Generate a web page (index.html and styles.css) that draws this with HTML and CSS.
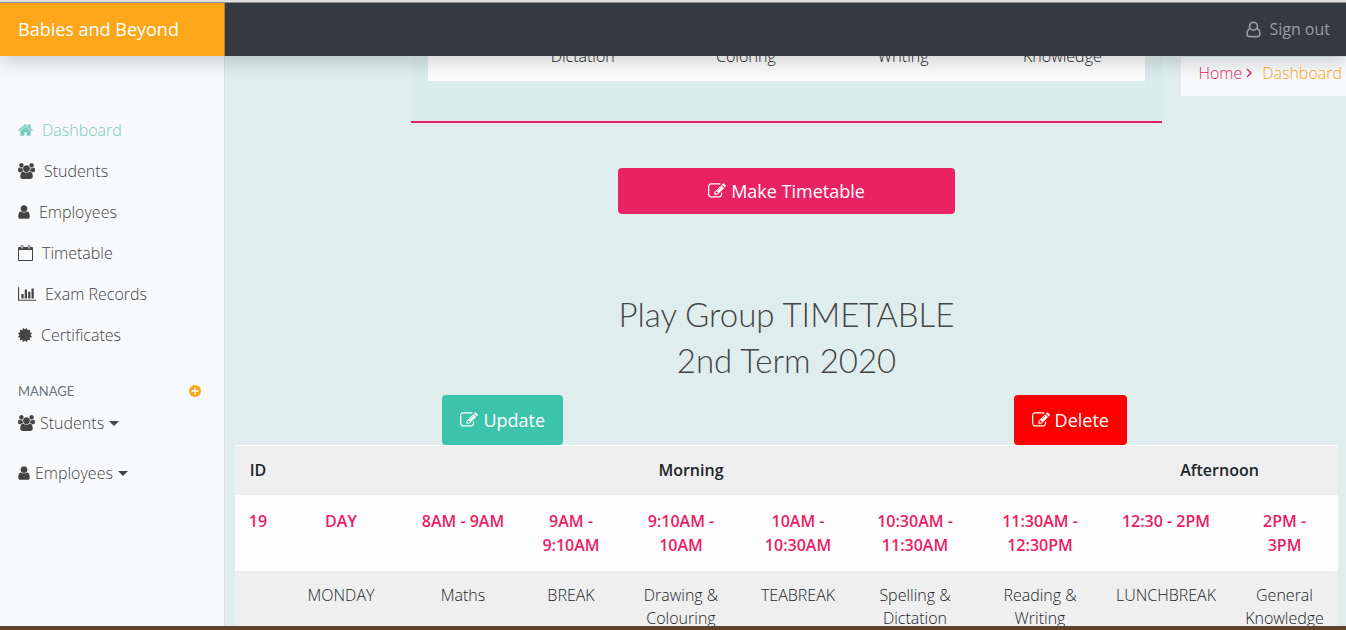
FILE: index.html
```html
<!DOCTYPE html>
<html lang="en">
<head>
<meta charset="utf-8">
<title>Babies and Beyond - Dashboard</title>
<link rel="stylesheet" href="styles.css">
</head>
<body>
<svg class="sprite" aria-hidden="true">
  <symbol id="i-users" viewBox="0 0 1920 1792"><path d="M593 896q-162 5-265 128h-134q-82 0-138-40.5t-56-118.5q0-353 124-353 6 0 43.5 21t97.5 42.5 119 21.5q67 0 133-23-5 37-5 66 0 139 81 256zm1071 637q0 120-73 189.5t-194 69.5h-874q-121 0-194-69.5t-73-189.5q0-53 3.5-103.5t14-109 26.5-108.5 43-97.5 62-81 85.5-53.5 111.5-20q10 0 43 21.5t73 48 107 48 135 21.5 135-21.5 107-48 73-48 43-21.5q61 0 111.5 20t85.5 53.5 62 81 43 97.5 26.5 108.5 14 109 3.5 103.5zm-1024-1277q0 106-75 181t-181 75-181-75-75-181 75-181 181-75 181 75 75 181zm704 384q0 159-112.5 271.5t-271.5 112.5-271.5-112.5-112.5-271.5 112.5-271.5 271.5-112.5 271.5 112.5 112.5 271.5zm576 225q0 78-56 118.5t-138 40.5h-134q-103-123-265-128 81-117 81-256 0-29-5-66 66 23 133 23 59 0 119-21.5t97.5-42.5 43.5-21q124 0 124 353zm-128-609q0 106-75 181t-181 75-181-75-75-181 75-181 181-75 181 75 75 181z"/></symbol>
  <symbol id="i-user" viewBox="256 0 1280 1792"><path d="M1536 1399q0 109-62.5 187t-150.5 78h-854q-88 0-150.5-78t-62.5-187q0-85 8.5-160.5t31.5-152 58.5-131 94-89 134.5-34.5q131 128 313 128t313-128q76 0 134.5 34.5t94 89 58.5 131 31.5 152 8.5 160.5zm-256-887q0 159-112.5 271.5t-271.5 112.5-271.5-112.5-112.5-271.5 112.5-271.5 271.5-112.5 271.5 112.5 112.5 271.5z"/></symbol>
  <symbol id="i-edit" viewBox="0 0 1792 1792"><path d="M888 1184l116-116-152-152-116 116v56h96v96h56zm440-720q-16-16-33 1l-350 350q-17 17-1 33t33-1l350-350q17-17 1-33zm80 594v190q0 119-84.5 203.5t-203.5 84.5h-832q-119 0-203.5-84.5t-84.5-203.5v-832q0-119 84.5-203.5t203.5-84.5h832q63 0 117 25 15 7 18 23 3 17-9 29l-49 49q-14 14-32 8-23-6-45-6h-832q-66 0-113 47t-47 113v832q0 66 47 113t113 47h832q66 0 113-47t47-113v-126q0-13 9-22l64-64q15-15 35-7t20 29zm-96-738l288 288-672 672h-288v-288zm444 132l-92 92-288-288 92-92q28-28 68-28t68 28l152 152q28 28 28 68t-28 68z"/></symbol>
</svg>

<header class="topbar">
  <a class="brand" href="#">Babies and Beyond</a>
  <a class="signout" href="#">
    <svg class="icon signout-icon" viewBox="0 0 16 18" aria-hidden="true"><g fill="none" stroke="currentColor" stroke-width="1.7"><circle cx="8" cy="5.5" r="4.2"/><path d="M4.6 8.2C2.300 8.500 1.200 10.500 1.200 13.400C1.200 15.500 2 16.600 3.800 16.600H12.200C14 16.600 14.800 15.500 14.800 13.400C14.800 10.500 13.700 8.500 11.400 8.200"/></g></svg>
    Sign out
  </a>
</header>

<div class="shell">
  <aside class="sidebar">
    <nav class="menu">
      <a class="menu-link active" href="#"><svg class="icon w15" viewBox="64 0 1664 1792" aria-hidden="true"><path d="M1472 992v480q0 26-19 45t-45 19h-384v-384h-256v384h-384q-26 0-45-19t-19-45v-480q0-1 .5-3t.5-3l575-474 575 474q1 2 1 6zm223-69l-62 74q-8 9-21 11h-3q-13 0-21-7l-692-577-692 577q-12 8-24 7-13-2-21-11l-62-74q-8-10-7-23.5t11-21.5l719-599q32-26 76-26t76 26l244 204v-195q0-14 9-23t23-9h192q14 0 23 9t9 23v408l219 182q10 8 11 21.5t-7 23.5z"/></svg>Dashboard</a>
      <a class="menu-link" href="#"><svg class="icon w17" aria-hidden="true"><use href="#i-users"/></svg>Students</a>
      <a class="menu-link" href="#"><svg class="icon w12" aria-hidden="true"><use href="#i-user"/></svg>Employees</a>
      <a class="menu-link" href="#"><svg class="icon w15" viewBox="0 0 15 16" aria-hidden="true"><path fill-rule="evenodd" d="M1 2H14Q15 2 15 3V15Q15 16 14 16H1Q0 16 0 15V3Q0 2 1 2ZM1 5V15H14V5Z"/><g fill="#f8f9fb" stroke="currentColor" stroke-width=".8"><rect x="3" y=".4" width="2" height="3.600" rx="1"/><rect x="10" y=".4" width="2" height="3.600" rx="1"/></g></svg>Timetable</a>
      <a class="menu-link" href="#"><svg class="icon w18" viewBox="0 0 2048 1792" aria-hidden="true"><path d="M640 896v512h-256v-512h256zm384-512v1024h-256v-1024h256zm1024 1152v128h-2048v-1536h128v1408h1920zm-640-896v768h-256v-768h256zm384-384v1152h-256v-1152h256z"/></svg>Exam Records</a>
      <a class="menu-link" href="#"><svg class="icon w14" viewBox="128 0 1536 1792" aria-hidden="true"><path d="M1504 896l138 135q30 28 20 70-12 41-52 51l-188 48 53 186q12 41-19 70-29 31-70 19l-186-53-48 188q-10 40-51 52-12 2-19 2-31 0-51-22l-135-138-135 138q-28 30-70 20-41-11-51-52l-48-188-186 53q-41 12-70-19-31-29-19-70l53-186-188-48q-40-10-52-51-10-42 20-70l138-135-138-135q-30-28-20-70 12-41 52-51l188-48-53-186q-12-41 19-70 29-31 70-19l186 53 48-188q10-41 51-51 41-12 70 19l135 139 135-139q29-30 70-19 41 10 51 51l48 188 186-53q41-12 70 19 31 29 19 70l-53 186 188 48q40 10 52 51 10 42-20 70z"/></svg>Certificates</a>
    </nav>
    <div class="manage-head">
      <span>MANAGE</span>
      <button class="add" type="button" aria-label="Add"><svg viewBox="0 0 12 12" aria-hidden="true"><circle cx="6" cy="6" r="6" fill="#faa51a"/><path d="M6 2.500V9.500M2.500 6H9.500" stroke="#fff" stroke-width="1.600"/></svg></button>
    </div>
    <nav class="manage">
      <button class="drop" type="button"><svg class="icon w17" aria-hidden="true"><use href="#i-users"/></svg>Students</button>
      <button class="drop" type="button"><svg class="icon w12" aria-hidden="true"><use href="#i-user"/></svg>Employees</button>
    </nav>
  </aside>

  <main class="content">
    <nav class="crumbs" aria-label="Breadcrumb">
      <a class="crumb-home" href="#">Home<svg class="chev" viewBox="0 0 6 10" aria-hidden="true"><path d="M1 1L5 5L1 9" fill="none" stroke="currentColor" stroke-width="1.400"/></svg></a>
      <a class="crumb-here" href="#">Dashboard</a>
    </nav>

    <section class="panel">
      <table class="preview">
        <colgroup><col class="p0"><col class="p1"><col class="p2"><col class="p3"><col class="p4"></colgroup>
        <tbody><tr><td></td><td>Dictation</td><td>Coloring</td><td>Writing</td><td>Knowledge</td></tr></tbody>
      </table>
    </section>

    <button class="btn make" type="button"><svg class="icon w18" aria-hidden="true"><use href="#i-edit"/></svg>Make Timetable</button>

    <h2 class="title">Play Group TIMETABLE<br>2nd Term 2020</h2>

    <div class="actions">
      <div class="action"><button class="btn update" type="button"><svg class="icon w18" aria-hidden="true"><use href="#i-edit"/></svg>Update</button></div>
      <div class="action"><button class="btn delete" type="button"><svg class="icon w18" aria-hidden="true"><use href="#i-edit"/></svg>Delete</button></div>
    </div>

    <table class="timetable">
      <colgroup><col class="c0"><col class="c1"><col class="c2"><col class="c3"><col class="c4"><col class="c5"><col class="c6"><col class="c7"><col class="c8"><col class="c9"></colgroup>
      <thead>
        <tr class="parts"><th>ID</th><th colspan="7">Morning</th><th colspan="2">Afternoon</th></tr>
        <tr class="times"><th>19</th><th>DAY</th><th>8AM - 9AM</th><th>9AM - 9:10AM</th><th>9:10AM - 10AM</th><th>10AM - 10:30AM</th><th>10:30AM - 11:30AM</th><th>11:30AM - 12:30PM</th><th>12:30 - 2PM</th><th>2PM -<br>3PM</th></tr>
      </thead>
      <tbody>
        <tr><td></td><td>MONDAY</td><td>Maths</td><td>BREAK</td><td>Drawing &amp; Colouring</td><td>TEABREAK</td><td>Spelling &amp; Dictation</td><td>Reading &amp; Writing</td><td>LUNCHBREAK</td><td>General Knowledge</td></tr>
      </tbody>
    </table>
  </main>
</div>
<div class="bottom-edge"></div>
</body>
</html>
```
FILE: styles.css
```css
* { box-sizing: border-box; }

body {
  margin: 0;
  height: 100vh;
  display: flex;
  flex-direction: column;
  overflow: hidden;
  background: #dfeeed;
  color: #212529;
  font: 340 16px/24px "Open Sans", sans-serif;
}

a { color: inherit; text-decoration: none; }
button { font: inherit; color: inherit; border: 0; background: none; padding: 0; cursor: pointer; }
.sprite { position: absolute; width: 0; height: 0; }

.icon { height: 16px; flex: none; fill: currentColor; }
.w12 { width: 12px; }
.w14 { width: 14px; }
.w15 { width: 15px; }
.w17 { width: 17px; }
.w18 { width: 18px; }

/* Top bar */
.topbar {
  position: relative;
  z-index: 2;
  flex: none;
  display: flex;
  justify-content: space-between;
  height: 56px;
  border-top: 2px solid #dfdfe0;
  background: #353941;
  box-shadow: 0 8px 16px rgba(0, 0, 0, .15);
}
.topbar::before {
  content: "";
  position: absolute;
  inset: 0 0 auto;
  height: 1px;
  background: #8c8d92;
}
.brand {
  width: 225px;
  padding: 0 18px;
  border-right: 1px solid #c08019;
  background: #fca61b;
  color: #fff;
  font-size: 18px;
  font-weight: 400;
  line-height: 54px;
}
.signout {
  display: flex;
  align-items: center;
  gap: 8px;
  padding-right: 16px;
  color: #9a9ca0;
  font-weight: 400;
}
.signout-icon { width: 15px; height: 17px; }

/* Sidebar */
.shell { flex: 1; display: flex; min-height: 0; }
.sidebar {
  flex: none;
  width: 225px;
  padding: 53px 23px 0 18px;
  border-right: 1px solid #d8dcde;
  background: #f8f9fb;
  color: #444;
}
.menu-link { display: flex; align-items: center; gap: 9px; height: 41px; }
.active { color: #76cdbd; }
.manage-head {
  display: flex;
  justify-content: space-between;
  align-items: center;
  margin-top: 24px;
  color: #6c757d;
  font: 400 13px/24px Lato, sans-serif;
}
.add { display: flex; width: 12px; height: 12px; }
.manage { display: flex; flex-direction: column; align-items: flex-start; gap: 26px; margin-top: 8px; }
.drop { display: flex; align-items: center; gap: 5px; line-height: 24px; }
.drop::after {
  content: "";
  border: 5px solid transparent;
  border-top-color: currentColor;
  border-bottom: 0;
}

/* Content */
.content {
  position: relative;
  flex: 1;
  min-width: 0;
  display: flex;
  flex-direction: column;
  align-items: center;
  padding: 0 8px 0 10px;
  overflow: hidden;
}
.crumbs {
  position: absolute;
  top: 1px;
  right: 0;
  display: flex;
  gap: 10px;
  padding: 4px 4px 11px 17px;
  background: #f8f9fb;
}
.crumb-home { display: flex; align-items: center; gap: 4px; color: #e91e63; }
.crumb-here { color: #fca61b; }
.chev { width: 6px; height: 10px; }

.panel {
  width: 68%;
  padding: 0 17px 40px;
  margin-top: -25px;
  border-bottom: 2px solid #e91e63;
  background: #daedea;
}
table { width: 100%; table-layout: fixed; border-collapse: collapse; text-align: center; }
.preview { background: #fdfdfd; }
.preview td { padding: 13px 0; }
.p0 { width: 71px; }
.p1 { width: 166px; }
.p2 { width: 160px; }
.p3 { width: 154px; }
.p4 { width: 164px; }

.btn {
  display: inline-flex;
  justify-content: center;
  align-items: center;
  gap: 5px;
  border-radius: 4px;
  color: #fff;
  font-size: 18px;
  font-weight: 400;
}
.btn .icon { height: 18px; }
.make { flex: none; width: 337px; height: 46px; margin-top: 45px; background: #e92363; }
.title {
  margin: 77px 0 12px;
  color: #444;
  font: 300 33px/46px Lato, sans-serif;
  text-align: center;
}
.actions { display: flex; align-self: stretch; margin: 0 -16px; }
.action { flex: 1; text-align: center; }
.update, .delete { height: 50px; padding: 0 18px; vertical-align: top; }
.update { background: #3dc3ac; }
.delete { background: #f00; }

.timetable { background: #fdfdfd; }
.timetable tr:nth-child(odd) { background: #efefef; }
.timetable thead tr:first-child { border-top: 1px solid #fdfdfd; }
.timetable th { padding: 14px 8px; font-weight: 600; vertical-align: top; }
.timetable .parts th { padding: 12px 8px 13px; }
.timetable .times th { color: #e91e63; }
.timetable td { padding: 13px 4px; vertical-align: top; line-height: 23px; }
.c0 { width: 46px; }
.c1 { width: 120px; }
.c2 { width: 124px; }
.c3 { width: 92px; }
.c4 { width: 128px; }
.c5 { width: 106px; }
.c6 { width: 128px; }
.c7 { width: 122px; }
.c8 { width: 130px; }
.c9 { width: 107px; }

.bottom-edge { position: relative; flex: none; height: 4px; background: #60432d; }
```
